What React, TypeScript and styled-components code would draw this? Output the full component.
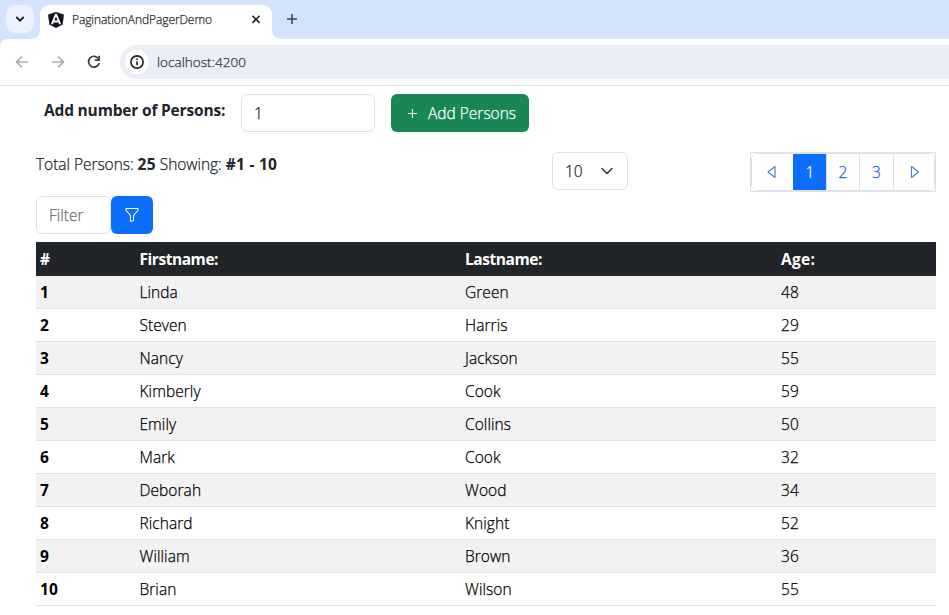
import React from "react";
import styled, { createGlobalStyle, css } from "styled-components";

const GlobalStyle = createGlobalStyle`
  *, *::before, *::after { box-sizing: border-box; }
  html, body { margin: 0; height: 100%; overflow: hidden; background: #fff; }
  body {
    font-family: "Open Sans", "Noto Sans", sans-serif;
    font-size: 15.5px;
    font-weight: 300;
    line-height: 24px;
    letter-spacing: 0;
    color: #212529;
    -webkit-text-stroke: 0.25px;
  }
  button, input { font: inherit; letter-spacing: inherit; margin: 0; }
  b, th, label { -webkit-text-stroke: 0; }
`;

const TabStrip = styled.header`
  height: 39px;
  display: flex;
  align-items: flex-start;
  padding: 5px 0 0 6px;
  background: #d3e3fd;
`;

const TabSearch = styled.button`
  width: 28px;
  height: 28px;
  padding: 0;
  border: 0;
  border-radius: 9px;
  background: #ebf1fd;
  display: grid;
  place-items: center;
`;

const Tab = styled.div`
  position: relative;
  width: 232px;
  height: 34px;
  margin-left: 6px;
  padding: 0 10px 5px 8px;
  border-radius: 9px 9px 0 0;
  background: #fff;
  display: flex;
  align-items: center;
  color: #1f1f1f;

  &::before, &::after {
    content: "";
    position: absolute;
    bottom: 0;
    width: 9px;
    height: 9px;
  }
  &::before {
    left: -9px;
    background: radial-gradient(circle at 0 0, transparent 8.5px, #fff 9px);
  }
  &::after {
    right: -9px;
    background: radial-gradient(circle at 100% 0, transparent 8.5px, #fff 9px);
  }
`;

const TabTitle = styled.span`
  flex: 1;
  margin-left: 8px;
  font-size: 12px;
  letter-spacing: -0.08px;
  white-space: nowrap;
`;

const NewTab = styled.button`
  width: 28px;
  height: 28px;
  margin-left: 6px;
  padding: 0;
  border: 0;
  background: none;
  display: grid;
  place-items: center;
`;

const ToolbarBack = styled.div`
  background: #d3e3fd;
`;

const Toolbar = styled.nav`
  height: 47px;
  padding: 6px 0 0 14px;
  border-bottom: 1px solid #e0e0e2;
  border-top-left-radius: 8px;
  background: #fff;
  display: flex;
`;

const NavIcons = styled.div`
  width: 106px;
  height: 34px;
  display: flex;
  align-items: center;
  gap: 20px;
`;

const AddressBar = styled.div`
  flex: 1;
  height: 34px;
  padding-left: 5px;
  border-radius: 17px 0 0 17px;
  background: #ebeef7;
  display: flex;
  align-items: center;
  font-size: 13.5px;
  letter-spacing: 0.04px;
  color: #303236;
`;

const SiteInfo = styled.span`
  width: 24px;
  height: 24px;
  margin-right: 8px;
  border-radius: 50%;
  background: #fff;
  display: grid;
  place-items: center;
`;

const Page = styled.main`
  width: 936px;
  padding: 8px 0 0 36px;
`;

const AddForm = styled.form`
  height: 58px;
  padding-left: 8px;
  display: flex;
  align-items: flex-start;
`;

const AddLabel = styled.label`
  width: 197px;
  padding-top: 4px;
  font-weight: 700;
  letter-spacing: -0.18px;
  white-space: nowrap;
`;

const field = css`
  height: 38px;
  border: 1px solid #dee2e6;
  border-radius: 6px;
  background: #fff;
  color: #212529;
  padding: 6px 12px;
`;

const Input = styled.input<{ $width: number }>`
  ${field}
  width: ${(p) => p.$width}px;
  &::placeholder { color: #6a6f74; opacity: 1; }
`;

const Button = styled.button<{ $tone: "success" | "primary" }>`
  height: 38px;
  padding: 0 12px 0 17px;
  border: 0;
  border-radius: 6px;
  background: ${(p) => (p.$tone === "success" ? "#198754" : "#0d6efd")};
  color: #fff;
  display: flex;
  align-items: center;
  white-space: nowrap;
`;

const AddButton = styled(Button)`
  width: 138px;
  margin-left: 16px;
  gap: 11px;
  letter-spacing: 0;
`;

const FilterButton = styled(Button)`
  width: 42px;
  padding: 0;
  justify-content: center;
`;

const SummaryRow = styled.section`
  height: 44px;
  display: flex;
  align-items: flex-start;
`;

const Summary = styled.p`
  width: 516px;
  margin: 0;
  letter-spacing: -0.04px;
  white-space: nowrap;
  b { font-weight: 700; letter-spacing: 0.25px; }
`;

const Select = styled.div`
  ${field}
  width: 76px;
  display: flex;
  align-items: center;
  justify-content: space-between;
`;

const Pagination = styled.div`
  width: 186px;
  height: 40px;
  margin-left: auto;
  border: 1px solid #dee2e6;
`;

const Pages = styled.ul`
  height: 38px;
  margin: 0;
  padding: 0;
  list-style: none;
  border: 1px solid #dee2e6;
  border-radius: 6px;
  overflow: hidden;
  display: grid;
  grid-template-columns: 41px 33px 33px 34px 1fr;
`;

const PageItem = styled.li<{ $active?: boolean }>`
  display: grid;
  place-items: center;
  color: ${(p) => (p.$active ? "#fff" : "#1f60d4")};
  background: ${(p) => (p.$active ? "#0d6efd" : "#fff")};
  border-left: 1px solid ${(p) => (p.$active ? "#0d6efd" : "#dee2e6")};
  &:first-child { border-left: 0; }
`;

const FilterRow = styled.section`
  height: 46px;
  display: flex;
`;

const Table = styled.table`
  width: 900px;
  table-layout: fixed;
  border-collapse: separate;
  border-spacing: 0;
  color: #000;

  th, td { text-align: left; padding: 0 4px; }
  th { font-weight: 700; letter-spacing: 0.2px; }
  tbody tr:nth-child(odd) { background: #f2f2f2; }
  tbody th, tbody td { height: 33px; border-bottom: 1px solid #dee2e6; }
  td { letter-spacing: 0.06px; }
`;

const Head = styled.thead`
  background: #212529;
  color: #fff;
  th { height: 34px; padding-bottom: 1px; letter-spacing: -0.45px; }
  th:last-child { letter-spacing: 0.3px; }
`;

const persons: [string, string, number][] = [
  ["Linda", "Green", 48],
  ["Steven", "Harris", 29],
  ["Nancy", "Jackson", 55],
  ["Kimberly", "Cook", 59],
  ["Emily", "Collins", 50],
  ["Mark", "Cook", 32],
  ["Deborah", "Wood", 34],
  ["Richard", "Knight", 52],
  ["William", "Brown", 36],
  ["Brian", "Wilson", 55],
];

const AngularLogo = () => (
  <svg width="16" height="16" viewBox="0 0 16 16">
    <path d="M8 0 15.9 2.6 14.7 12.5 8 16 1.3 12.5.1 2.6Z" fill="#14151c" />
    <path d="M8 2.2 3.9 12.2M8 2.2 12.1 12.2M5.4 9.5h5.2" fill="none" stroke="#fff" strokeWidth="1.8" />
  </svg>
);

const Arrow = ({ flip }: { flip?: boolean }) => (
  <svg width="16" height="16" viewBox="0 0 16 16" fill="none" stroke="#a9abad" strokeWidth="1.6">
    <path d={flip ? "M2 8h11M8.2 2.8 13.4 8l-5.2 5.2" : "M14 8H3M7.8 2.8 2.6 8l5.2 5.2"} />
  </svg>
);

const Triangle = ({ flip }: { flip?: boolean }) => (
  <svg width="14" height="14" viewBox="0 0 14 14" fill="none" stroke="#4a78dc" strokeWidth="1.1" strokeLinejoin="round">
    <path d={flip ? "M4.5 1.5v11L11.5 7Z" : "M9 1.5v11L2 7Z"} />
  </svg>
);

export default function App() {
  return (
    <>
      <GlobalStyle />
      <TabStrip>
        <TabSearch aria-label="Search tabs">
          <svg width="10" height="8" viewBox="0 0 10 8" fill="none" stroke="#1f1f1f" strokeWidth="1.8">
            <path d="m1.3 2 3.7 3.7L8.7 2" />
          </svg>
        </TabSearch>
        <Tab>
          <AngularLogo />
          <TabTitle>PaginationAndPagerDemo</TabTitle>
          <svg width="12" height="12" viewBox="0 0 12 12" fill="none" stroke="#1f1f1f" strokeWidth="1.6">
            <path d="m2.4 1.7 7.2 7.2M9.6 1.7 2.4 8.9" />
          </svg>
        </Tab>
        <NewTab aria-label="New tab">
          <svg width="12" height="12" viewBox="0 0 12 12" fill="none" stroke="#45474b" strokeWidth="1.6">
            <path d="M6 1v10M1 6h10" />
          </svg>
        </NewTab>
      </TabStrip>
      <ToolbarBack>
        <Toolbar>
          <NavIcons>
            <Arrow />
            <Arrow flip />
            <svg width="16" height="16" viewBox="0 0 16 16" fill="none" stroke="#3c4043" strokeWidth="1.7">
              <path d="M12.6 4.9A5.4 5.4 0 1 0 13.2 9" />
              <path d="M13.2 1.8v4.4H8.8" />
            </svg>
          </NavIcons>
          <AddressBar>
            <SiteInfo>
              <svg width="16" height="16" viewBox="0 0 16 16" fill="none" stroke="#1f1f1f" strokeWidth="1.6">
                <circle cx="8" cy="8" r="6.1" />
                <path d="M8 7.2v4M8 4.5v1.6" />
              </svg>
            </SiteInfo>
            localhost:4200
          </AddressBar>
        </Toolbar>
      </ToolbarBack>
      <Page>
        <AddForm>
          <AddLabel htmlFor="count">Add number of Persons:</AddLabel>
          <Input id="count" $width={134} defaultValue="1" />
          <AddButton type="button" $tone="success">
            <svg width="9" height="9" viewBox="0 0 9 9" stroke="#fff" strokeWidth="1.1">
              <path d="M4.5 0v9M0 4.5h9" />
            </svg>
            Add Persons
          </AddButton>
        </AddForm>
        <SummaryRow>
          <Summary>
            Total Persons: <b>25</b> Showing: <b>#1 - 10</b>
          </Summary>
          <Select>
            10
            <svg width="16" height="16" viewBox="0 0 16 16" fill="none" stroke="#343a40" strokeWidth="1.6" strokeLinecap="round" strokeLinejoin="round">
              <path d="m3 5.5 5 5 5-5" />
            </svg>
          </Select>
          <Pagination>
            <Pages>
              <PageItem><Triangle /></PageItem>
              <PageItem $active>1</PageItem>
              <PageItem>2</PageItem>
              <PageItem>3</PageItem>
              <PageItem><Triangle flip /></PageItem>
            </Pages>
          </Pagination>
        </SummaryRow>
        <FilterRow>
          <Input $width={75} placeholder="Filter" />
          <FilterButton $tone="primary" aria-label="Filter">
            <svg width="16" height="16" viewBox="0 0 16 16" fill="#fff">
              <path d="M1.5 1.5A.5.5 0 0 1 2 1h12a.5.5 0 0 1 .5.5v2a.5.5 0 0 1-.128.334L10 8.692V13.5a.5.5 0 0 1-.342.474l-3 1A.5.5 0 0 1 6 14.5V8.692L1.628 3.834A.5.5 0 0 1 1.5 3.5zm1 .5v1.308l4.372 4.858A.5.5 0 0 1 7 8.5v5.306l2-.666V8.5a.5.5 0 0 1 .128-.334L13.5 3.308V2z" />
            </svg>
          </FilterButton>
        </FilterRow>
        <Table>
          <colgroup>
            <col style={{ width: 99.5 }} />
            <col style={{ width: 325.5 }} />
            <col style={{ width: 316 }} />
            <col />
          </colgroup>
          <Head>
            <tr>
              <th>#</th>
              <th>Firstname:</th>
              <th>Lastname:</th>
              <th>Age:</th>
            </tr>
          </Head>
          <tbody>
            {persons.map(([first, last, age], i) => (
              <tr key={i}>
                <th>{i + 1}</th>
                <td>{first}</td>
                <td>{last}</td>
                <td>{age}</td>
              </tr>
            ))}
          </tbody>
        </Table>
      </Page>
    </>
  );
}
